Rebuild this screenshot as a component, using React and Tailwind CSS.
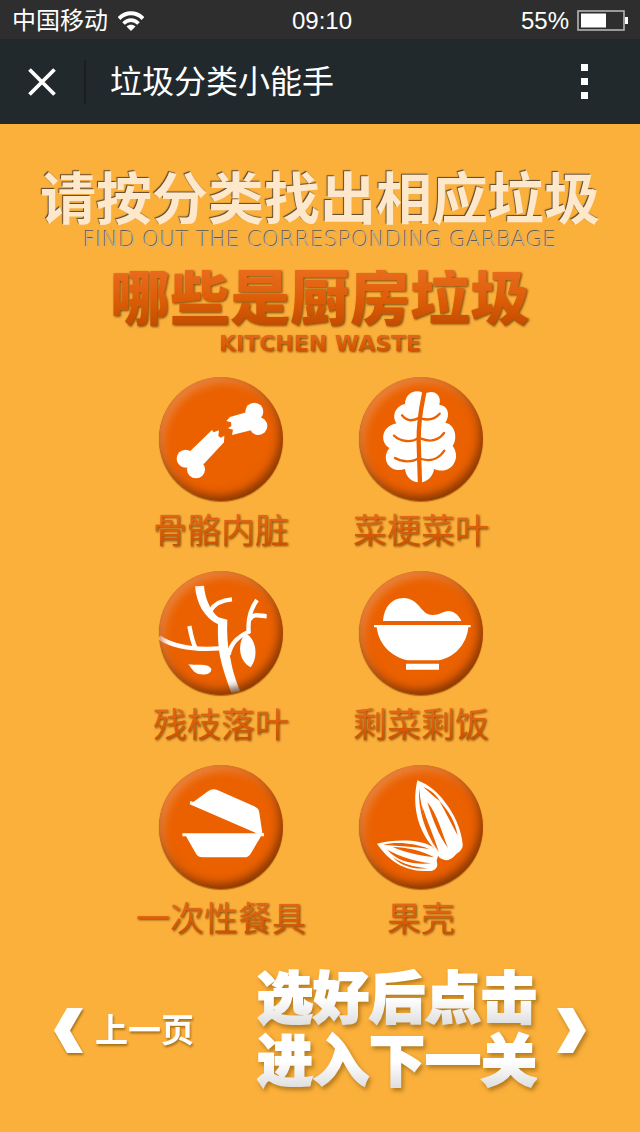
import { useState } from "react";

const raisedText =
  "bg-gradient-to-b from-[#e96c1c] via-[#dd5d06] to-[#bf4a00] bg-clip-text text-transparent drop-shadow-[1px_1px_1px_rgba(90,45,0,0.8)]";

function BoneIcon() {
  return (
    <svg viewBox="27 21 372 372" className="size-full" fill="white" aria-hidden="true">
      <circle cx="107" cy="266" r="27" />
      <circle cx="138" cy="298" r="27" />
      <path d="M117 247 L186 180 L191 187 L207 181 L205 198 L212 203 L223 197 L222 217 L162 281 L120 290Z" />
      <circle cx="313" cy="125" r="27" />
      <circle cx="325" cy="168" r="27" />
      <path d="M289 127 L240 141 L229 153 L243 157 L244 168 L234 175 L249 179 L246 195 L303 181 L318 150Z" />
    </svg>
  );
}

function CabbageIcon() {
  return (
    <svg viewBox="45 21 372 372" className="size-full" fill="white" aria-hidden="true">
      <path d="M236 68 C215 57 184 68 183 102 C150 110 144 142 158 160 C110 170 108 218 136 234 C108 270 140 312 183 297 C185 320 203 336 224 337 L236 337 C256 330 268 315 270 297 C320 318 354 266 326 228 C344 200 330 162 304 158 C320 135 312 106 286 104 C294 74 270 60 250 68Z" />
      <g fill="none" stroke="#eb6100" strokeLinecap="round">
        <path d="M242 62 C234 105 223 140 224 215 L228 342" strokeWidth="13" strokeLinecap="butt" />
        <path
          d="M174 136 C188 154 206 153 222 145 M232 146 C255 152 275 145 287 131 M150 197 C170 216 203 218 221 205 M232 206 C260 218 285 210 300 189 M153 264 C175 277 205 277 222 265 M232 267 C260 276 285 266 301 242"
          strokeWidth="7"
        />
      </g>
    </svg>
  );
}

function BranchIcon() {
  return (
    <svg viewBox="27 24 372 372" className="size-full" fill="white" aria-hidden="true">
      <defs>
        <linearGradient id="trunk" x1="0" y1="0" x2="0" y2="1">
          <stop offset="0.92" stopColor="#ffffff" />
          <stop offset="1" stopColor="#d0d0d0" />
        </linearGradient>
      </defs>
      <path
        fill="url(#trunk)"
        d="M135 70 L162 68 C164 102 180 142 205 163 L232 170 C230 210 232 250 242 290 C248 325 260 360 271 385 L244 390 C230 350 214 310 207 262 C204 235 203 208 204 184 C163 165 139 120 135 70Z"
      />
      <g fill="none" stroke="white" strokeWidth="13">
        <path d="M182 142 C195 120 220 111 246 109" />
        <path d="M236 276 C242 238 272 216 296 206 C293 170 300 140 321 111" />
        <path d="M299 170 C310 150 326 158 350 160" />
        <path d="M27 223 C70 252 125 262 210 256" />
        <path d="M118 189 C123 215 127 238 137 255" />
      </g>
      <path d="M294 215 C323 240 322 288 302 313 C268 295 260 246 284 214Z" />
      <path d="M115 303 C130 309 175 298 184 318 C184 336 160 336 145 333 C130 328 124 315 115 303Z" />
    </svg>
  );
}

function BowlIcon() {
  return (
    <svg viewBox="45 24 372 372" className="size-full" fill="white" aria-hidden="true">
      <path d="M117 174 C120 130 145 105 178 105 C227 106 230 156 265 156 C290 156 298 143 315 144 C335 146 348 163 352 174Z" />
      <path d="M90 186H380V193H373C368 245 330 285 284 292H190C140 280 105 245 98 193H90Z" />
      <path d="M186 302H285V320H186Z" />
    </svg>
  );
}

function LunchBoxIcon() {
  return (
    <svg viewBox="101 29 372 372" className="size-full" fill="white" aria-hidden="true">
      <path d="M195 137 L204 140 L248 108 C256 102 266 100 276 104 L385 152 C396 156 401 162 402 172 L411 233 L416 236 L396 235 L193 147Z" />
      <path d="M171 234H416V243H407L376 295C370 303 366 306 358 306H232C222 306 217 302 213 297L182 243H171Z" />
    </svg>
  );
}

function NutIcon() {
  return (
    <svg viewBox="45 27 372 372" className="size-full" fill="white" aria-hidden="true">
      <path d="M220 73 C258 88 280 108 302 137 C332 175 352 220 356 265 C357 282 344 288 332 299 C320 312 306 316 294 309 C283 306 281 296 270 277 C230 235 200 160 220 73Z" />
      <path d="M99 263 C150 250 225 248 265 272 L285 290 L278 313 L280 325 C280 340 266 347 254 345 C200 347 145 330 99 263Z" />
      <g fill="#eb6100">
        <path d="M225 96 C222 160 240 220 279 283 C252 222 232 168 225 96Z" />
        <path d="M234 148 C240 200 258 245 284 288 C270 240 250 200 234 148Z" />
        <path d="M250 138 C280 175 292 225 312 276 C282 235 266 190 250 138Z" />
        <path d="M238 93 C262 102 280 120 288 136 C268 122 256 108 238 93Z" />
        <path d="M286 135 C315 165 334 198 341 238 C320 200 306 170 286 135Z" />
        <path d="M118 266 C160 256 215 262 255 279 C210 272 165 270 118 266Z" />
        <path d="M146 273 C190 274 235 284 270 304 C225 298 185 290 146 273Z" />
        <path d="M130 281 C165 300 205 315 262 322 C210 326 160 318 130 281Z" />
        <path d="M146 303 C175 324 215 334 250 337 C210 341 172 331 146 303Z" />
      </g>
    </svg>
  );
}

const items = [
  { name: "骨骼内脏", Icon: BoneIcon },
  { name: "菜梗菜叶", Icon: CabbageIcon },
  { name: "残枝落叶", Icon: BranchIcon },
  { name: "剩菜剩饭", Icon: BowlIcon },
  { name: "一次性餐具", Icon: LunchBoxIcon },
  { name: "果壳", Icon: NutIcon },
];

function StatusBar() {
  return (
    <div className="grid h-[39px] grid-cols-3 items-center bg-[#2e2e2e] px-3 pt-0.5 text-2xl leading-none">
      <div className="flex items-center gap-2.5">
        <span>中国移动</span>
        <svg viewBox="0 0 26 20" className="h-5 w-[26px]" fill="none" stroke="white" strokeWidth="4" aria-hidden="true">
          <path d="M1 7.5 C8 0.5 18 0.5 25 7.5" />
          <path d="M5.5 12.5 C10 8 16 8 20.5 12.5" strokeWidth="3.6" />
          <path d="M8.5 15.5 C11 13 15 13 17.5 15.5 L13 20Z" fill="white" stroke="none" />
        </svg>
      </div>
      <span className="pl-1 text-center">09:10</span>
      <div className="flex items-center justify-end gap-2">
        <span>55%</span>
        <svg viewBox="0 0 51 21" className="h-[21px] w-[51px]" aria-hidden="true">
          <rect x="1" y="1" width="46" height="19" fill="none" stroke="#b5b5b5" strokeWidth="1.6" />
          <rect x="4" y="3.5" width="25" height="14" fill="white" />
          <rect x="48" y="7" width="3" height="7" fill="white" />
        </svg>
      </div>
    </div>
  );
}

function TitleBar() {
  return (
    <header className="flex h-[85px] items-center bg-[#22292c] pr-9 pl-7">
      <button type="button" aria-label="关闭" className="size-7">
        <svg viewBox="0 0 28 28" className="size-full" stroke="white" strokeWidth="3.8" aria-hidden="true">
          <path d="M1.5 1.5 L26.5 26.5 M26.5 1.5 L1.5 26.5" />
        </svg>
      </button>
      <div className="ml-7 h-11 w-0.5 bg-[#191e20]" />
      <h1 className="ml-6 flex-1 text-[32px] leading-none">垃圾分类小能手</h1>
      <button type="button" aria-label="更多" className="flex w-10 flex-col items-center gap-[7px]">
        <span className="size-[7px] bg-white" />
        <span className="size-[7px] bg-white" />
        <span className="size-[7px] bg-white" />
      </button>
    </header>
  );
}

export default function App() {
  const [picked, setPicked] = useState([]);
  const toggle = (name) =>
    setPicked((list) => (list.includes(name) ? list.filter((n) => n !== name) : [...list, name]));

  return (
    <div className="min-h-screen bg-[#fbb03b] font-['Liberation_Sans','Noto_Sans_CJK_SC',sans-serif] text-white">
      <StatusBar />
      <TitleBar />
      <main className="flex flex-col pt-[46px] pb-8">
        <h2 className="text-center text-[56px] leading-[60px] font-bold text-[#fee8cb] [text-shadow:-1px_-1px_1px_rgba(70,60,50,0.9)]">
          请按分类找出相应垃圾
        </h2>
        <p className="text-center font-['DejaVu_Sans',sans-serif] text-[22px] leading-5 font-extralight whitespace-nowrap text-[#cdb796] [text-shadow:-1px_-1px_0_#5f5850]">
          FIND OUT THE CORRESPONDING GARBAGE
        </p>
        <h3 className={`mt-5 text-center text-[60px] leading-[60px] font-black ${raisedText}`}>哪些是厨房垃圾</h3>
        <p className={`text-center font-['DejaVu_Sans',sans-serif] text-[22px] leading-7 font-bold ${raisedText}`}>
          KITCHEN WASTE
        </p>

        <div className="mt-[19px] grid grid-cols-[200px_200px] justify-center gap-y-4 pl-0.5">
          {items.map(({ name, Icon }) => (
            <button
              key={name}
              type="button"
              aria-pressed={picked.includes(name)}
              onClick={() => toggle(name)}
              className="flex flex-col items-center gap-1.5 whitespace-nowrap"
            >
              <span className="relative size-[124px] overflow-hidden rounded-full bg-[#eb6100] shadow-[0_1px_1px_rgba(110,60,0,0.6)] after:absolute after:inset-0 after:rounded-full after:shadow-[inset_-3px_-5px_10px_rgba(90,35,0,0.7),inset_4px_5px_10px_rgba(235,150,90,0.75)]">
                <Icon />
              </span>
              <span className={`text-[34px] leading-[48px] ${raisedText}`}>{name}</span>
            </button>
          ))}
        </div>

        <nav className="mt-6 flex items-center justify-between px-[54px]">
          <button type="button" className="flex items-center gap-3 drop-shadow-[1px_2px_1px_rgba(110,70,0,0.6)]">
            <svg viewBox="0 0 29 45" className="h-[45px] w-[29px]" fill="white" aria-hidden="true">
              <path d="M13 0H29L16 22.5L29 45H13L0 22.5Z" />
            </svg>
            <span className="text-[33px] leading-none font-bold">上一页</span>
          </button>
          <button type="button" className="flex items-center gap-5 drop-shadow-[2px_3px_2px_rgba(110,70,0,0.5)]">
            <span className="text-[56px] leading-[63px] font-black">
              <span className="block bg-gradient-to-b from-white from-50% to-[#d8d8d8] bg-clip-text text-transparent [-webkit-text-stroke:2px_transparent]">
                选好后点击
              </span>
              <span className="block bg-gradient-to-b from-white from-50% to-[#d8d8d8] bg-clip-text text-transparent [-webkit-text-stroke:2px_transparent]">
                进入下一关
              </span>
            </span>
            <svg viewBox="0 0 29 45" className="h-[45px] w-[29px]" fill="white" aria-hidden="true">
              <path d="M0 0H16L29 22.5L16 45H0L13 22.5Z" />
            </svg>
          </button>
        </nav>
      </main>
    </div>
  );
}
